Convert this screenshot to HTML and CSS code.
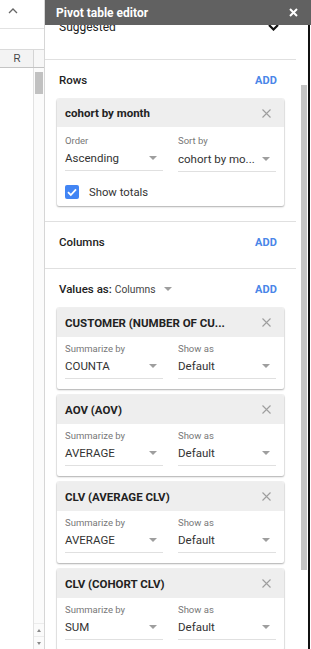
FILE: index.html
```html
<!DOCTYPE html>
<html>
<head>
<meta charset="utf-8">
<link rel="stylesheet" href="styles.css">
</head>
<body>
<div class="app">
  <div class="sheet">
    <div class="sheet-top">
      <svg class="chev-up" width="10" height="6" viewBox="0 0 10 6"><polyline points="1,5 5,1 9,5" fill="none" stroke="#666" stroke-width="1.3"/></svg>
    </div>
    <div class="sheet-gap"></div>
    <div class="col-head">
      <div class="col-cell">R</div>
      <div class="col-corner"></div>
    </div>
    <div class="sheet-body">
      <div class="cells"></div>
      <div class="vscroll">
        <div class="vthumb"></div>
        <div class="vspace"></div>
        <div class="varrow"><span class="tri-up"></span></div>
        <div class="varrow down"><span class="tri-down"></span></div>
      </div>
    </div>
  </div>

  <div class="panel">
    <div class="panel-head">
      <span class="panel-title">Pivot table editor</span>
      <svg class="panel-close" width="9" height="9" viewBox="0 0 9 9"><path d="M1 1L8 8M8 1L1 8" stroke="#fff" stroke-width="2"/></svg>
    </div>
    <div class="panel-main">
      <div class="content">
        <div class="inner">
          <div class="section suggested">
            <div class="sugg-row">
              <span class="sugg-text">Suggested</span>
              <svg width="11" height="7" viewBox="0 0 11 7"><polyline points="1,1 5.5,5.5 10,1" fill="none" stroke="#111" stroke-width="2.2"/></svg>
            </div>
          </div>

          <div class="section rows">
            <div class="sec-head">
              <span class="sec-title">Rows</span>
              <span class="add">ADD</span>
            </div>
            <div class="card">
              <div class="card-head">
                <span class="card-title">cohort by month</span>
                <svg class="card-x" width="9" height="9" viewBox="0 0 9 9"><path d="M0.5 0.5L8.5 8.5M8.5 0.5L0.5 8.5" stroke="#9e9e9e" stroke-width="1.1"/></svg>
              </div>
              <div class="card-body">
                <div class="fields">
                  <div class="field">
                    <div class="label">Order</div>
                    <div class="value"><span>Ascending</span><span class="arrow"></span></div>
                  </div>
                  <div class="field shifted">
                    <div class="label">Sort by</div>
                    <div class="value"><span>cohort by mo...</span><span class="arrow"></span></div>
                  </div>
                </div>
                <div class="check-row">
                  <span class="checkbox"><svg width="14" height="14" viewBox="0 0 14 14"><polyline points="3,7.2 5.8,10 11,4.3" fill="none" stroke="#fff" stroke-width="1.8"/></svg></span>
                  <span class="check-label">Show totals</span>
                </div>
              </div>
            </div>
          </div>

          <div class="section columns">
            <div class="sec-head">
              <span class="sec-title">Columns</span>
              <span class="add">ADD</span>
            </div>
          </div>

          <div class="section values">
            <div class="sec-head">
              <span class="sec-title">Values as: <span class="values-as">Columns</span><span class="arrow small"></span></span>
              <span class="add">ADD</span>
            </div>
            <div class="value-cards">
              <div class="card vcard">
                <div class="card-head tall">
                  <span class="card-title">CUSTOMER (NUMBER OF CU...</span>
                  <svg class="card-x" width="9" height="9" viewBox="0 0 9 9"><path d="M0.5 0.5L8.5 8.5M8.5 0.5L0.5 8.5" stroke="#9e9e9e" stroke-width="1.1"/></svg>
                </div>
                <div class="card-body vbody">
                  <div class="fields">
                    <div class="field">
                      <div class="label">Summarize by</div>
                      <div class="value"><span>COUNTA</span><span class="arrow"></span></div>
                    </div>
                    <div class="field">
                      <div class="label">Show as</div>
                      <div class="value"><span>Default</span><span class="arrow"></span></div>
                    </div>
                  </div>
                </div>
              </div>
              <div class="card vcard">
                <div class="card-head tall">
                  <span class="card-title">AOV (AOV)</span>
                  <svg class="card-x" width="9" height="9" viewBox="0 0 9 9"><path d="M0.5 0.5L8.5 8.5M8.5 0.5L0.5 8.5" stroke="#9e9e9e" stroke-width="1.1"/></svg>
                </div>
                <div class="card-body vbody">
                  <div class="fields">
                    <div class="field">
                      <div class="label">Summarize by</div>
                      <div class="value"><span>AVERAGE</span><span class="arrow"></span></div>
                    </div>
                    <div class="field">
                      <div class="label">Show as</div>
                      <div class="value"><span>Default</span><span class="arrow"></span></div>
                    </div>
                  </div>
                </div>
              </div>
              <div class="card vcard">
                <div class="card-head tall">
                  <span class="card-title">CLV (AVERAGE CLV)</span>
                  <svg class="card-x" width="9" height="9" viewBox="0 0 9 9"><path d="M0.5 0.5L8.5 8.5M8.5 0.5L0.5 8.5" stroke="#9e9e9e" stroke-width="1.1"/></svg>
                </div>
                <div class="card-body vbody">
                  <div class="fields">
                    <div class="field">
                      <div class="label">Summarize by</div>
                      <div class="value"><span>AVERAGE</span><span class="arrow"></span></div>
                    </div>
                    <div class="field">
                      <div class="label">Show as</div>
                      <div class="value"><span>Default</span><span class="arrow"></span></div>
                    </div>
                  </div>
                </div>
              </div>
              <div class="card vcard">
                <div class="card-head tall">
                  <span class="card-title">CLV (COHORT CLV)</span>
                  <svg class="card-x" width="9" height="9" viewBox="0 0 9 9"><path d="M0.5 0.5L8.5 8.5M8.5 0.5L0.5 8.5" stroke="#9e9e9e" stroke-width="1.1"/></svg>
                </div>
                <div class="card-body vbody">
                  <div class="fields">
                    <div class="field">
                      <div class="label">Summarize by</div>
                      <div class="value"><span>SUM</span><span class="arrow"></span></div>
                    </div>
                    <div class="field">
                      <div class="label">Show as</div>
                      <div class="value"><span>Default</span><span class="arrow"></span></div>
                    </div>
                  </div>
                </div>
              </div>
            </div>
          </div>
        </div>
      </div>
      <div class="pscroll"><div class="pthumb"></div></div>
      <div class="edge"></div>
      <div class="edge-white"></div>
    </div>
  </div>
</div>
</body>
</html>
```

FILE: styles.css
```css
* { box-sizing: border-box; }
html, body { margin: 0; padding: 0; background: #fff; }
body { font-family: Roboto, "Liberation Sans", Arial, sans-serif; color: #333; }

.app { display: flex; width: 311px; height: 649px; overflow: hidden; }

/* spreadsheet strip */
.sheet { width: 45px; flex: none; display: flex; flex-direction: column; border-right: 1px solid #d6d6d6; }
.sheet-top { height: 29px; border-bottom: 1px solid #e2e2e2; display: flex; align-items: flex-start; padding: 8px 0 0 8px; }
.sheet-gap { height: 20px; }
.col-head { height: 19px; display: flex; border-top: 1px solid #dadada; border-bottom: 1px solid #c4c4c4; background: #f3f3f3; }
.col-cell { width: 34px; border-right: 1px solid #d4d4d4; font-family: Arial, "Liberation Sans", sans-serif; font-size: 10px; color: #444; display: flex; align-items: center; justify-content: center; padding-left: 1px; }
.col-corner { flex: 1; background: #f7f7f7; }
.sheet-body { flex: 1; display: flex; }
.cells { width: 34px; border-right: 1px solid #e2e2e2; }
.vscroll { flex: 1; display: flex; flex-direction: column; background: #fbfbfb; }
.vthumb { margin: 4px 1px 0 1px; height: 22px; background: #c1c1c1; }
.vspace { flex: 1; }
.varrow { height: 13px; display: flex; align-items: center; justify-content: center; border-top: 1px solid #ececec; }
.tri-up { width: 0; height: 0; border-left: 2.5px solid transparent; border-right: 2.5px solid transparent; border-bottom: 3px solid #8a8a8a; }
.tri-down { width: 0; height: 0; border-left: 2.5px solid transparent; border-right: 2.5px solid transparent; border-top: 3px solid #8a8a8a; }

/* panel */
.panel { flex: 1; display: flex; flex-direction: column; min-width: 0; }
.panel-head { height: 25px; flex: none; background: #616161; display: flex; align-items: center; justify-content: space-between; padding: 0 13px 0 11px; position: relative; z-index: 1; }
.panel-title { color: #fff; font-weight: 700; font-size: 12px; }
.panel-close { display: block; }
.panel-main { flex: 1; display: flex; min-height: 0; }
.content { width: 251px; flex: none; overflow: hidden; }
.inner { margin-top: -12px; }
.pscroll { width: 12px; flex: none; padding: 60px 1px 0 5px; }
.pthumb { height: 485px; background: #c4c4c4; }
.edge { width: 2px; flex: none; background: #111; }
.edge-white { width: 1px; flex: none; }

.section { border-bottom: 1px solid #e0e0e0; padding: 0 12px; }
.suggested { padding-bottom: 18px; }
.sugg-row { height: 28px; display: flex; align-items: center; justify-content: space-between; padding: 0 5px 0 2px; }
.sugg-text { font-size: 12px; color: #222; }

.sec-head { height: 28px; display: flex; align-items: center; justify-content: space-between; padding: 0 7px 0 2px; }
.sec-title { font-size: 11.5px; font-weight: 500; color: #222; display: flex; align-items: center; }
.add { font-size: 11px; font-weight: 700; color: #4a86e8; letter-spacing: 0.1px; }
.values-as { font-size: 10.3px; font-weight: 400; color: #444; margin-left: 3px; }
.arrow.small { margin-left: 8px; }

.rows { padding-top: 6px; padding-bottom: 15px; }
.columns { padding-top: 6px; padding-bottom: 12px; }
.values { padding-top: 6px; border-bottom: none; }

.card { margin-top: 5px; border-radius: 2px; background: #fff; box-shadow: 0 0 0 1px rgba(0,0,0,0.05), 0 1px 2px rgba(0,0,0,0.28); }
.card-head { height: 28px; background: #eeeeee; border-radius: 2px 2px 0 0; display: flex; align-items: center; justify-content: space-between; padding: 0 13px 0 8px; }
.card-head.tall { height: 29px; }
.card-title { font-size: 11.5px; font-weight: 700; color: #222; white-space: nowrap; }
.card-x { display: block; }
.card-body { padding: 8px 8px 7px 8px; }
.vbody { padding: 6px 8px 10px 8px; }

.fields { display: flex; gap: 15px; align-items: flex-start; }
.field { width: 98px; display: flex; flex-direction: column; }
.field.shifted .value { margin-top: 3px; }
.label { font-size: 9.5px; line-height: 12px; color: #777; }
.value { margin-top: 2px; height: 22px; display: flex; align-items: center; justify-content: space-between; padding: 0 6px 3px 0; border-bottom: 1px solid #e0e0e0; font-size: 11.5px; color: #333; white-space: nowrap; }
.arrow { width: 0; height: 0; border-left: 4px solid transparent; border-right: 4px solid transparent; border-top: 4px solid #9e9e9e; flex: none; }

.check-row { display: flex; align-items: center; margin-top: 13px; }
.checkbox { width: 14px; height: 14px; background: #4285f4; border-radius: 2px; display: block; }
.checkbox svg { display: block; }
.check-label { font-size: 11.3px; color: #333; margin-left: 10px; }

.value-cards { display: flex; flex-direction: column; gap: 6px; margin-top: 5px; }
.vcard { margin-top: 0; height: 81px; }
```
